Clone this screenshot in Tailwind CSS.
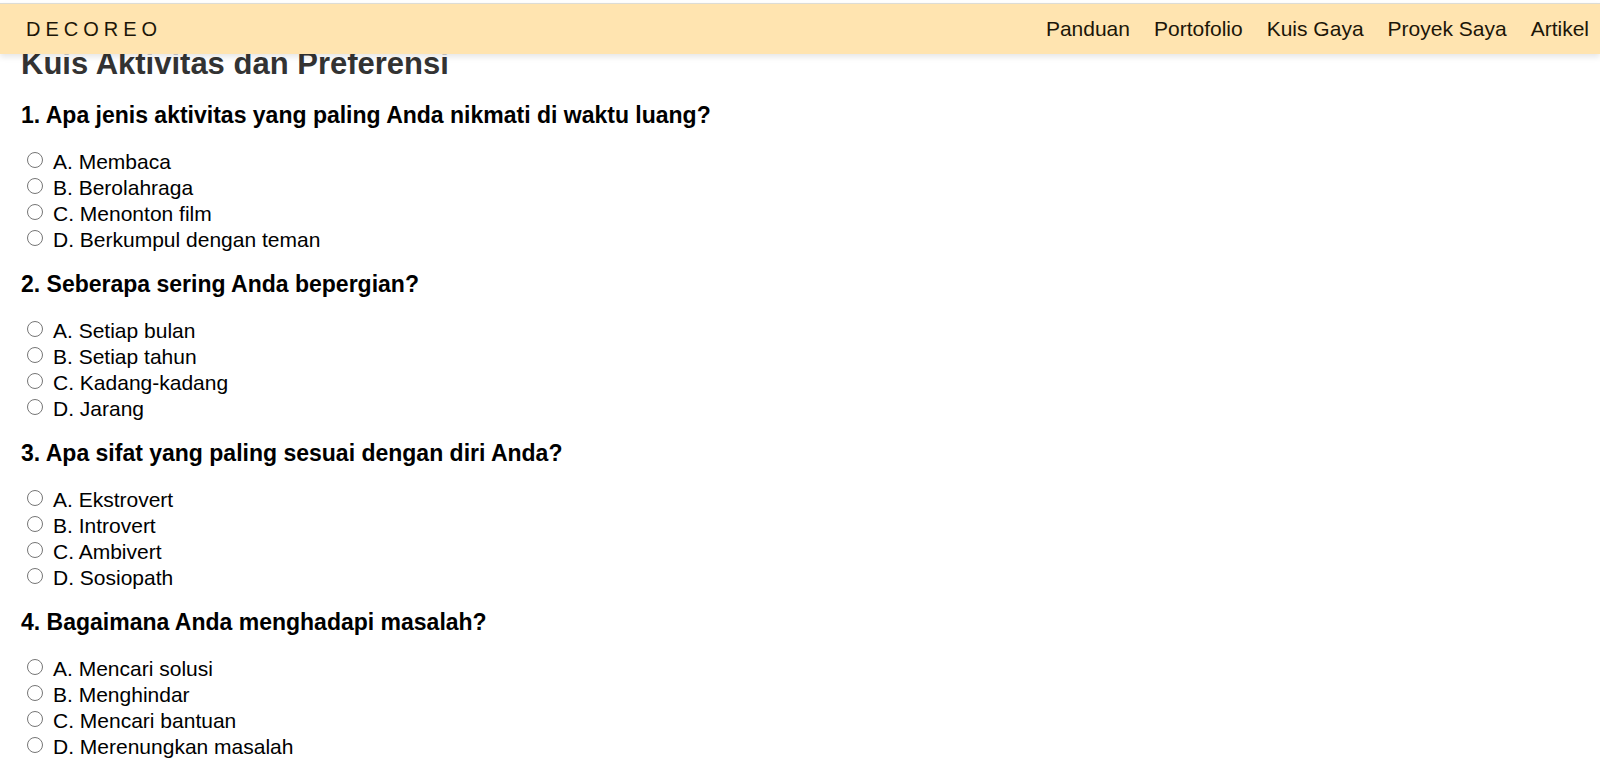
<!DOCTYPE html>
<html lang="id">
<head>
<meta charset="utf-8">
<meta name="viewport" content="width=device-width, initial-scale=1">
<title>Decoreo</title>
<script src="https://cdn.jsdelivr.net/npm/@tailwindcss/browser@4"></script>
</head>
<body class="bg-white text-black font-['Liberation_Sans',Arial,sans-serif] text-[21px] leading-[26px]">
<header class="sticky top-0 z-10 border-t-3 border-white">
  <div class="flex h-[51px] items-center justify-between border-t border-[#dcdcd6] bg-[#ffe4b0] pl-[26px] pr-[11px] text-[#1c1608] shadow-[0_3px_6px_rgba(0,0,0,0.1)]">
    <a href="#" class="text-[20px] tracking-[5px]">DECOREO</a>
    <nav class="flex gap-6">
      <a href="#">Panduan</a>
      <a href="#">Portofolio</a>
      <a href="#">Kuis Gaya</a>
      <a href="#">Proyek Saya</a>
      <a href="#">Artikel</a>
    </nav>
  </div>
</header>
<main class="-mt-2 px-[21px]">
  <h1 class="text-[31px] leading-[36px] font-bold text-[#333]">Kuis Aktivitas dan Preferensi</h1>
  <form id="quiz" class="mt-5 flex flex-col gap-[18px]"></form>
</main>
<script>
const questions = [
  ["1. Apa jenis aktivitas yang paling Anda nikmati di waktu luang?", ["A. Membaca", "B. Berolahraga", "C. Menonton film", "D. Berkumpul dengan teman"]],
  ["2. Seberapa sering Anda bepergian?", ["A. Setiap bulan", "B. Setiap tahun", "C. Kadang-kadang", "D. Jarang"]],
  ["3. Apa sifat yang paling sesuai dengan diri Anda?", ["A. Ekstrovert", "B. Introvert", "C. Ambivert", "D. Sosiopath"]],
  ["4. Bagaimana Anda menghadapi masalah?", ["A. Mencari solusi", "B. Menghindar", "C. Mencari bantuan", "D. Merenungkan masalah"]]
];
document.getElementById("quiz").innerHTML = questions.map(([title, options], q) => `
  <section role="radiogroup" aria-labelledby="q${q}">
    <h3 id="q${q}" class="mb-5 text-[23px] leading-[27px] font-bold">${title}</h3>
    ${options.map((label, o) => `
      <div class="flex items-start pl-[6px]">
        <input type="radio" id="q${q}o${o}" name="q${q}" value="${o}" class="mt-[3px] mr-[10px] size-4 appearance-none rounded-full border border-[#767676] bg-white checked:border-4 checked:border-[#0075ff]">
        <label for="q${q}o${o}">${label}</label>
      </div>`).join("")}
  </section>`).join("");
</script>
</body>
</html>
